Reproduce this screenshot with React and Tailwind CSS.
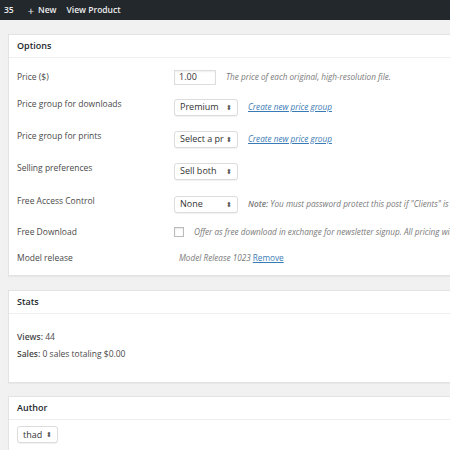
import React from 'react';

const font = { fontFamily: '"Open Sans", "Noto Sans", sans-serif' };

function Select({ value, width }) {
  return (
    <div className={`flex h-[17px] ${width} items-center justify-between rounded-[3px] border border-[#dcdcdc] bg-white pl-[5px] pr-[5px] text-[9px] text-[#333] shadow-[0_1px_1px_rgba(0,0,0,0.06)]`}>
      <span className="overflow-hidden whitespace-nowrap">{value}</span>
      <span className="text-[7px] leading-none text-[#555]">⬍</span>
    </div>
  );
}

function Row({ label, height, lift, children }) {
  return (
    <div className={`flex ${height} items-center`}>
      <div className={`w-[157px] shrink-0 text-[8.5px] text-[#4a4a4a] ${lift ? 'mb-[6px]' : ''}`}>{label}</div>
      <div className="flex items-center gap-[10px] whitespace-nowrap">{children}</div>
    </div>
  );
}

const Note = ({ children }) => (
  <span className="text-[8.2px] italic text-[#7a7a7a]">{children}</span>
);

const Link = ({ children }) => (
  <span className="text-[8.2px] italic text-[#3b7bb5] underline">{children}</span>
);

function Panel({ title, children, className = '' }) {
  return (
    <div className={`ml-[8px] -mr-[20px] border border-[#e3e3e3] bg-white shadow-[0_1px_1px_rgba(0,0,0,0.04)] ${className}`}>
      <div className="flex h-[23px] items-center border-b border-[#eee] px-[8px] pb-[1px] text-[9px] font-semibold text-[#23282d]">
        {title}
      </div>
      {children}
    </div>
  );
}

export default function App() {
  return (
    <div className="h-[450px] w-[450px] overflow-hidden bg-[#f1f1f1]" style={font}>
      <div className="flex h-[20px] items-center gap-[10px] bg-[#23282d] pl-[4px] text-[8.5px] font-semibold text-[#eee]">
        <span>35</span>
        <span className="ml-[4px] flex items-center gap-[4px]">
          <span className="text-[11px] font-normal leading-none">+</span>
          New
        </span>
        <span>View Product</span>
      </div>

      <Panel title="Options" className="mt-[14px]">
        <div className="flex flex-col px-[8px] pb-[1px] pt-[4px]">
          <Row label="Price ($)" height="h-[30px]">
            <div className="flex h-[15px] w-[42px] items-center border border-[#ddd] bg-white px-[4px] text-[9px] text-[#333] shadow-[inset_0_1px_2px_rgba(0,0,0,0.07)]">
              1.00
            </div>
            <Note>The price of each original, high-resolution file.</Note>
          </Row>
          <Row label="Price group for downloads" height="h-[30px]" lift>
            <Select value="Premium" width="w-[64px]" />
            <Link>Create new price group</Link>
          </Row>
          <Row label="Price group for prints" height="h-[34px]" lift>
            <Select value="Select a pr" width="w-[64px]" />
            <Link>Create new price group</Link>
          </Row>
          <Row label="Selling preferences" height="h-[30px]" lift>
            <Select value="Sell both" width="w-[64px]" />
          </Row>
          <Row label="Free Access Control" height="h-[36px]" lift>
            <Select value="None" width="w-[64px]" />
            <Note>
              <b className="font-semibold">Note:</b> You must password protect this post if "Clients" is selected
            </Note>
          </Row>
          <Row label="Free Download" height="h-[20px]">
            <div className="h-[10px] w-[10px] border border-[#bbb] bg-white shadow-[inset_0_1px_2px_rgba(0,0,0,0.1)]" />
            <Note>Offer as free download in exchange for newsletter signup. All pricing will be ignored.</Note>
          </Row>
          <Row label="Model release" height="h-[32px]">
            <span className="ml-[5px] -mr-[8px] text-[8.2px] italic text-[#7a7a7a]">Model Release 1023</span>
            <span className="text-[8.2px] text-[#3b7bb5] underline">Remove</span>
          </Row>
        </div>
      </Panel>

      <Panel title="Stats" className="mt-[14px]">
        <div className="flex h-[68px] flex-col justify-center gap-[4px] px-[8px] pb-[4px] text-[8.5px] text-[#4a4a4a]">
          <div><b className="font-semibold">Views:</b> 44</div>
          <div><b className="font-semibold">Sales:</b> 0 sales totaling $0.00</div>
        </div>
      </Panel>

      <Panel title="Author" className="mt-[13px]">
        <div className="px-[8px] pb-[20px] pt-[6px]">
          <Select value="thad" width="w-[41px]" />
        </div>
      </Panel>
    </div>
  );
}
